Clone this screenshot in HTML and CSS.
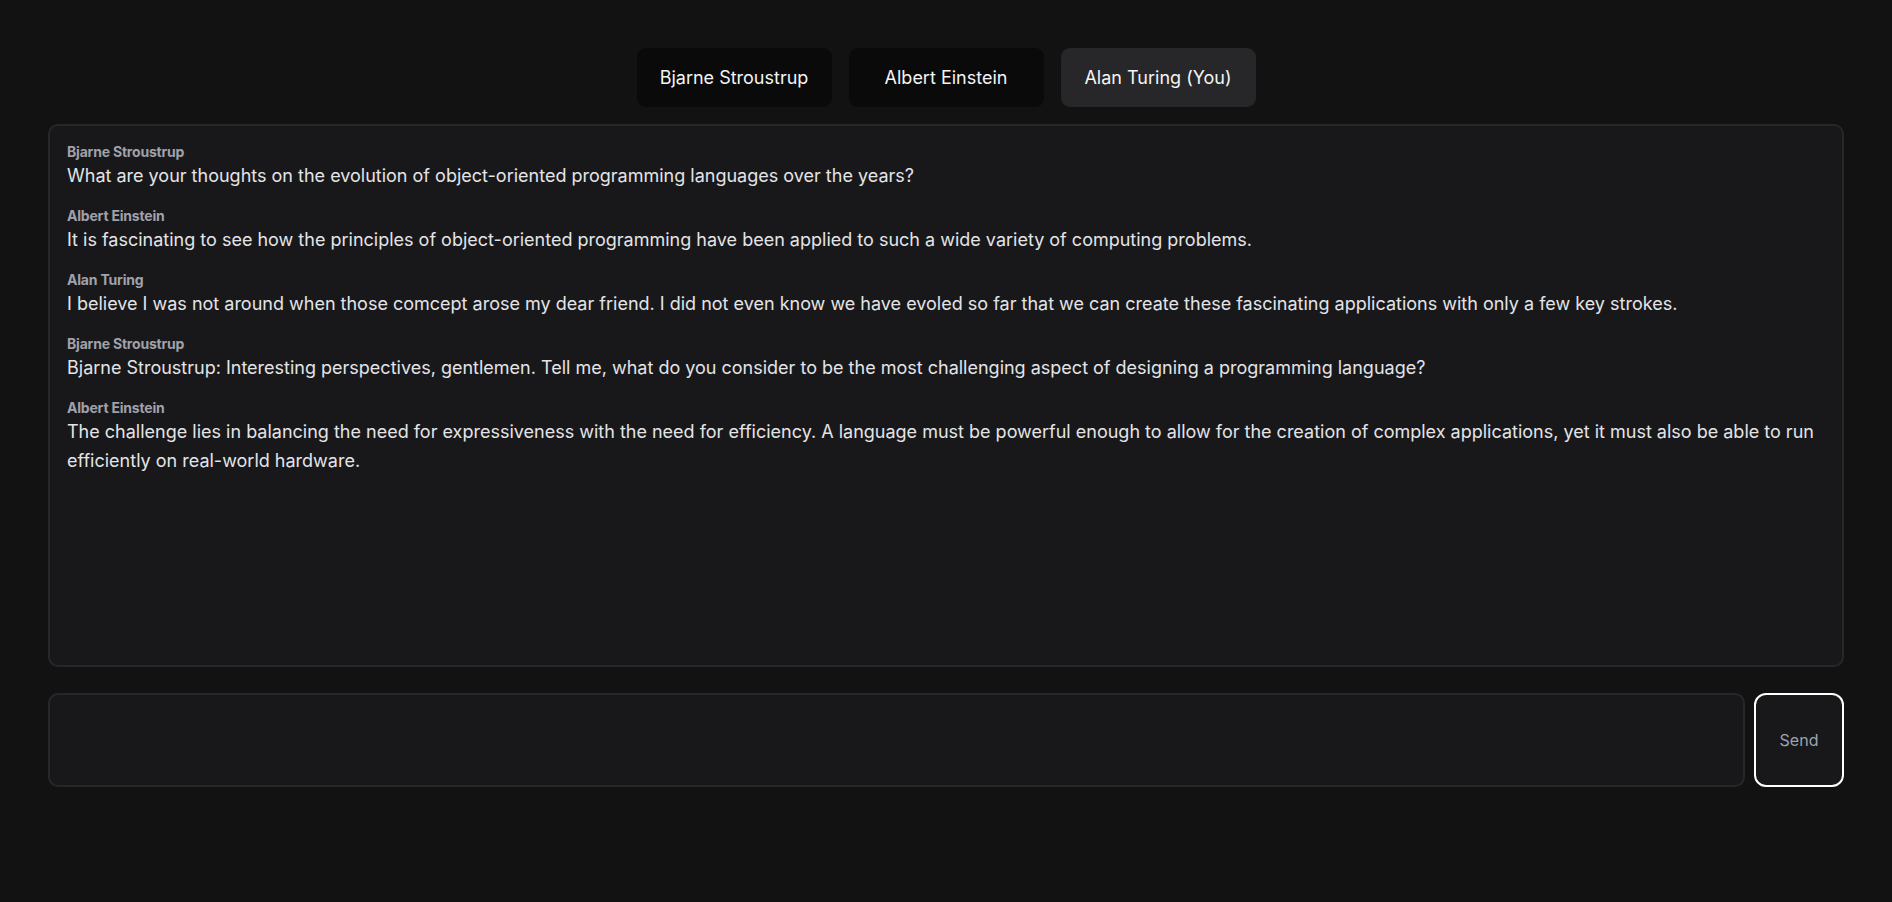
FILE: index.html
```html
<!DOCTYPE html>
<html lang="en">
<head>
<meta charset="utf-8">
<title>Chat</title>
<link rel="stylesheet" href="styles.css">
</head>
<body>
<div class="app">
  <nav class="tabs">
    <button class="tab">Bjarne Stroustrup</button>
    <button class="tab">Albert Einstein</button>
    <button class="tab active">Alan Turing (You)</button>
  </nav>
  <section class="chat">
    <div class="msg">
      <div class="who">Bjarne Stroustrup</div>
      <div class="text">What are your thoughts on the evolution of object-oriented programming languages over the years?</div>
    </div>
    <div class="msg">
      <div class="who">Albert Einstein</div>
      <div class="text">It is fascinating to see how the principles of object-oriented programming have been applied to such a wide variety of computing problems.</div>
    </div>
    <div class="msg">
      <div class="who">Alan Turing</div>
      <div class="text">I believe I was not around when those comcept arose my dear friend. I did not even know we have evoled so far that we can create these fascinating applications with only a few key strokes.</div>
    </div>
    <div class="msg">
      <div class="who">Bjarne Stroustrup</div>
      <div class="text">Bjarne Stroustrup: Interesting perspectives, gentlemen. Tell me, what do you consider to be the most challenging aspect of designing a programming language?</div>
    </div>
    <div class="msg">
      <div class="who">Albert Einstein</div>
      <div class="text">The challenge lies in balancing the need for expressiveness with the need for efficiency. A language must be powerful enough to allow for the creation of complex applications, yet it must also be able to run efficiently on real-world hardware.</div>
    </div>
  </section>
  <form class="composer">
    <textarea class="input"></textarea>
    <button type="button" class="send">Send</button>
  </form>
</div>
</body>
</html>
```
FILE: styles.css
```css
* { box-sizing: border-box; }
html, body { margin: 0; padding: 0; }
body {
  background: #121212;
  font-family: Inter, "Noto Sans", sans-serif;
  color: #e4e4e7;
}
.app {
  padding: 48px 48px 0;
}
.tabs {
  display: flex;
  justify-content: center;
  gap: 17px;
  margin-bottom: 17px;
}
.tab {
  width: 195px;
  height: 59px;
  border: none;
  border-radius: 9px;
  background: #0a0a0a;
  color: #f4f4f5;
  font-family: Inter, sans-serif;
  font-size: 18px;
  padding: 0;
}
.tab.active { background: #27272a; }
.chat {
  height: 543px;
  background: #18181b;
  border: 2px solid #27272a;
  border-radius: 10px;
  padding: 16px 17px;
}
.msg { margin-bottom: 16px; }
.who {
  font-size: 14px;
  font-weight: 700;
  letter-spacing: -0.2px;
  color: #a1a1aa;
  line-height: 19px;
}
.text {
  font-size: 18px;
  line-height: 29px;
  color: #e4e4e7;
}
.composer {
  display: flex;
  gap: 9px;
  margin-top: 26px;
}
.input {
  flex: 1;
  height: 94px;
  background: #18181b;
  border: 2px solid #27272a;
  border-radius: 10px;
  resize: none;
  color: #e4e4e7;
  font-family: Inter, sans-serif;
}
.send {
  width: 90px;
  height: 94px;
  background: #18181b;
  border: 2px solid #ffffff;
  border-radius: 12px;
  color: #9ca3af;
  font-family: Inter, sans-serif;
  font-size: 16px;
}
```
